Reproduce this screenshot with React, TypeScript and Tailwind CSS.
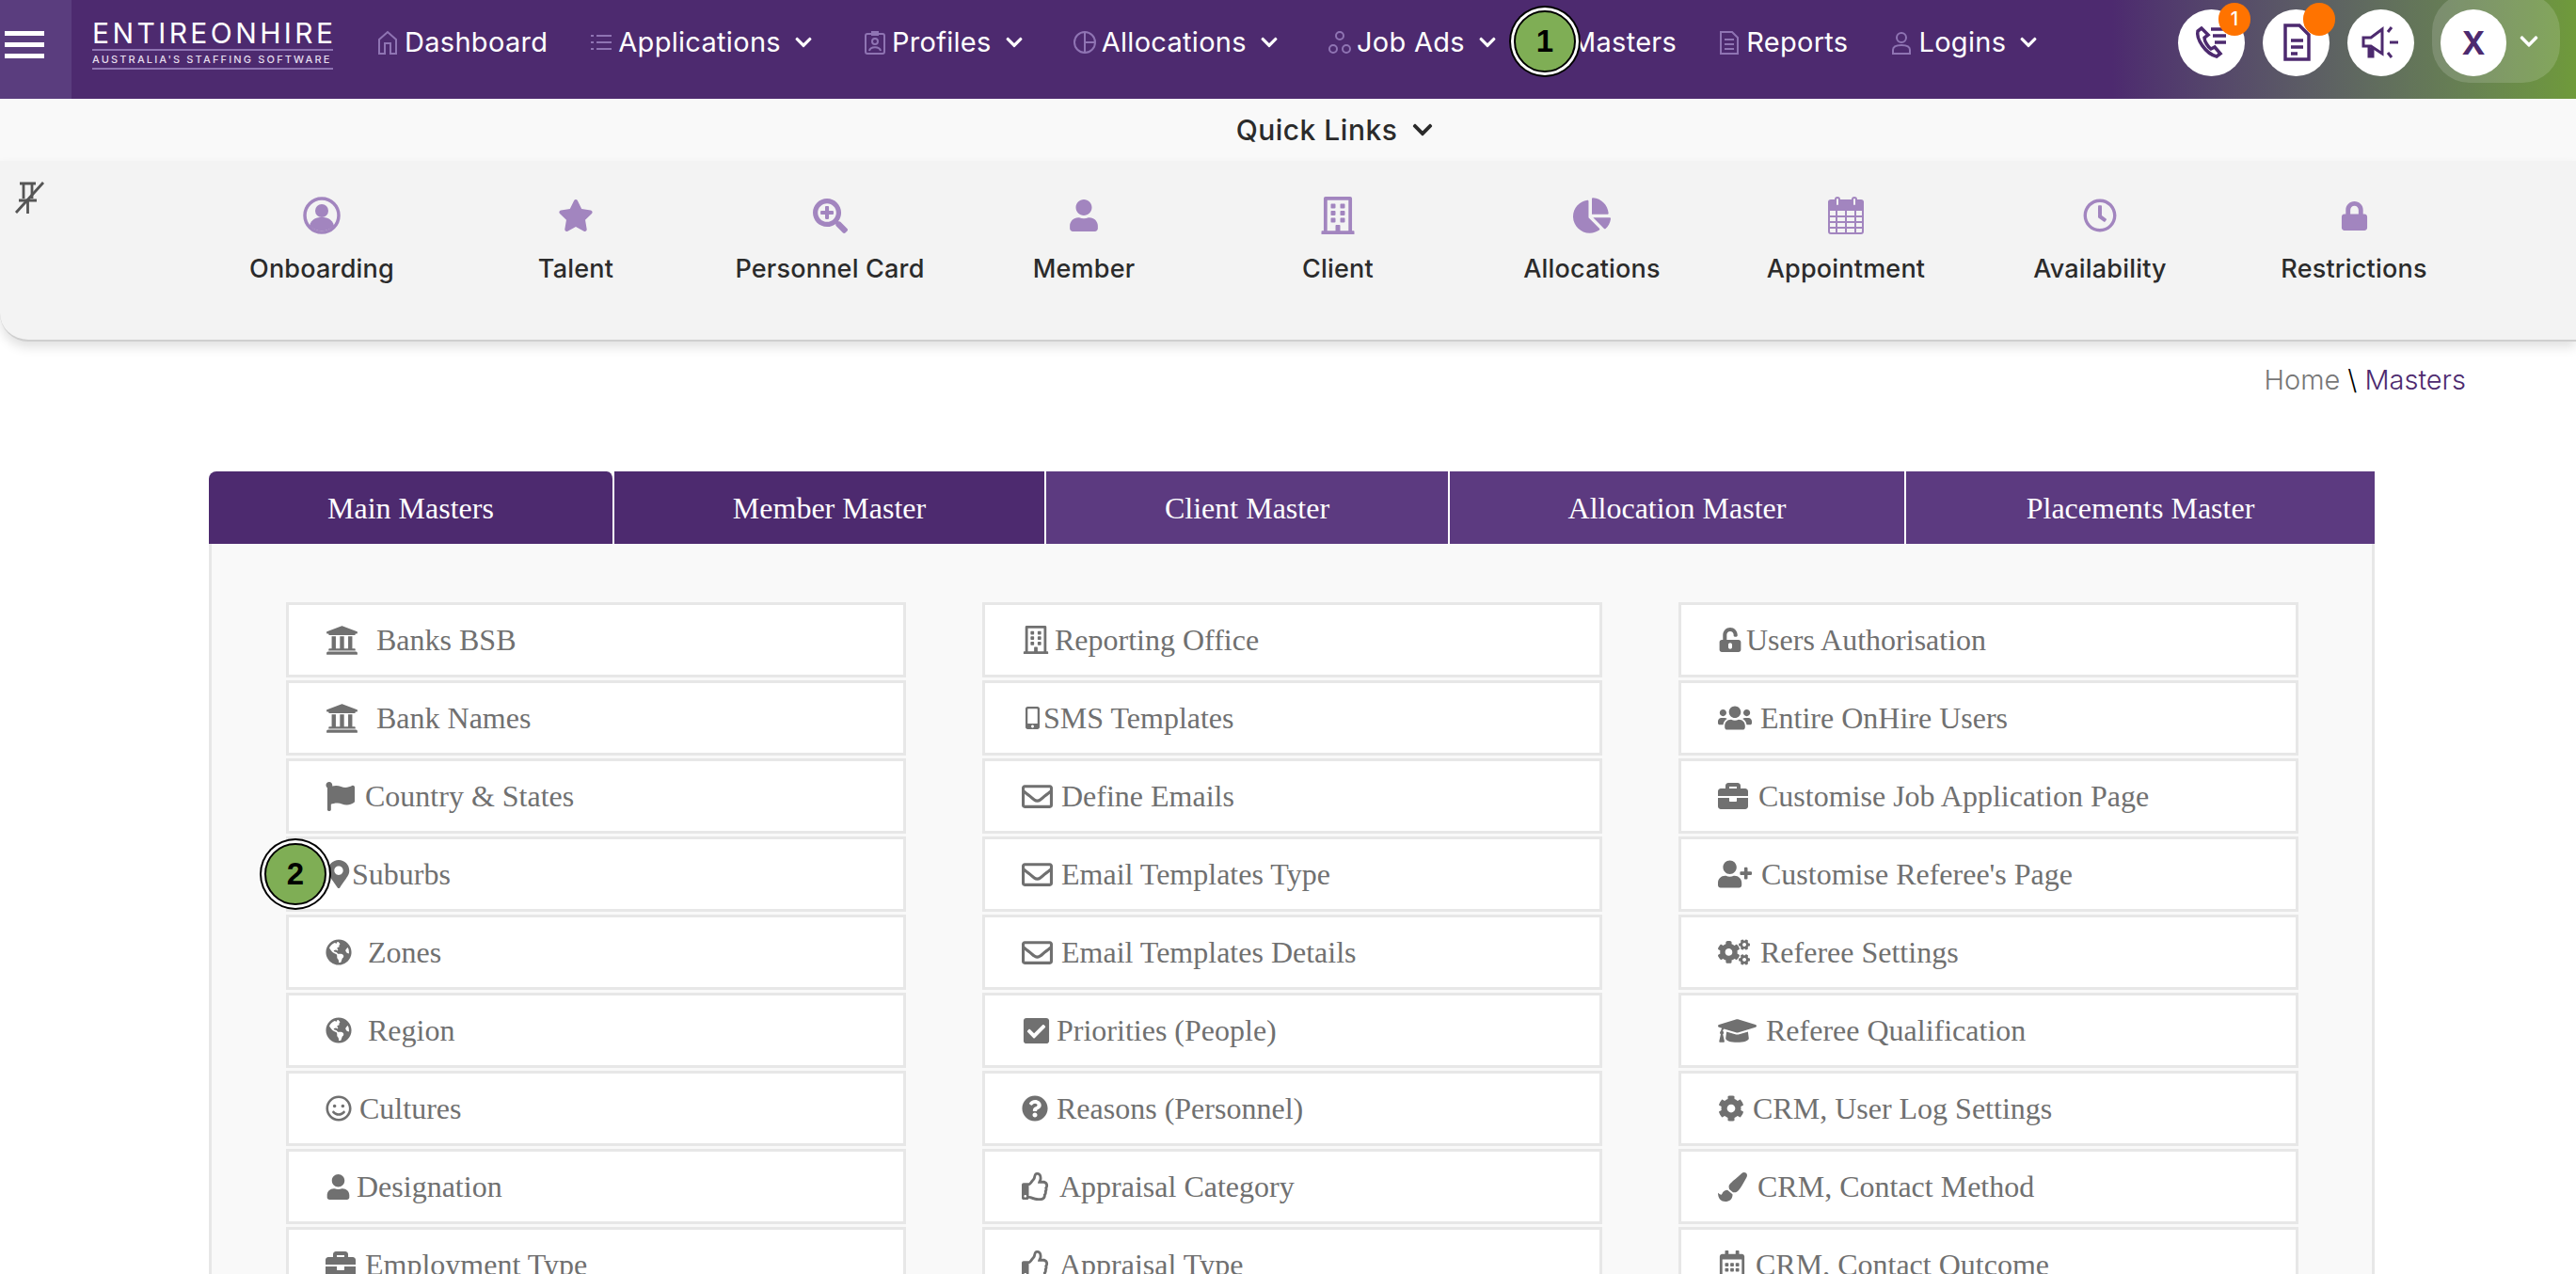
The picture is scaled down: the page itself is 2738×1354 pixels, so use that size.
import React from "react";
import {
  FaUniversity, FaFlag, FaMapMarkerAlt, FaGlobeAmericas, FaRegSmile, FaUser, FaBriefcase,
  FaRegBuilding, FaMobileAlt, FaRegEnvelope, FaCheckSquare, FaQuestionCircle, FaRegThumbsUp,
  FaUnlockAlt, FaUsers, FaUserPlus, FaCogs, FaGraduationCap, FaCog, FaPaintBrush, FaRegCalendarAlt,
  FaStar, FaSearchPlus, FaChartPie, FaRegClock, FaLock, FaChevronDown,
} from "react-icons/fa";

const NavSvg = ({ children }: { children: React.ReactNode }) => (
  <svg width="24" height="26" viewBox="0 0 24 26" fill="none" stroke="#8f74b3" strokeWidth="2" className="shrink-0">{children}</svg>
);

const Chevron = () => <FaChevronDown className="text-white shrink-0" size={20} />;

const navItems: { label: string; chevron?: boolean; icon: React.ReactNode; cls: string }[] = [
  { label: "Dashboard", cls: "mr-[45px]", icon: <NavSvg><path d="M3 25V10l9-8 9 8v15h-6V14H9v11z" /></NavSvg> },
  { label: "Applications", chevron: true, cls: "mr-[54px]", icon: <NavSvg><path d="M1 6h3M7 6h16M1 13h3M7 13h16M1 20h3M7 20h16" /></NavSvg> },
  { label: "Profiles", chevron: true, cls: "mr-[53px]", icon: <NavSvg><rect x="2" y="4" width="20" height="21" rx="2" /><path d="M9 2h6v3H9z" /><circle cx="12" cy="12" r="3" /><path d="M6 22c1-5 11-5 12 0" /></NavSvg> },
  { label: "Allocations", chevron: true, cls: "mr-[53px]", icon: <NavSvg><circle cx="12" cy="13" r="11" /><path d="M12 2v22M12 13h11" /></NavSvg> },
  { label: "Job Ads", chevron: true, cls: "mr-[49px]", icon: <NavSvg><circle cx="12" cy="6" r="4" /><circle cx="5" cy="20" r="4" /><circle cx="19" cy="20" r="4" /></NavSvg> },
  { label: "Masters", cls: "mr-[44px]", icon: <NavSvg><circle cx="12" cy="13" r="9" /></NavSvg> },
  { label: "Reports", cls: "mr-[45px]", icon: <NavSvg><path d="M3 2h12l6 6v17H3z" /><path d="M7 10h10M7 15h10M7 20h10" /></NavSvg> },
  { label: "Logins", chevron: true, cls: "", icon: <NavSvg><circle cx="12" cy="8" r="5" /><path d="M3 25v-4c0-3 3-5 9-5s9 2 9 5v4z" /></NavSvg> },
];

const OnboardIcon = () => (
  <svg width="40" height="40" viewBox="0 0 40 40"><circle cx="20" cy="20" r="18" fill="none" stroke="#a285bf" strokeWidth="3.5" /><circle cx="20" cy="15" r="7" fill="#a285bf" /><path d="M7 31c2-8 8-9 13-9s11 1 13 9c-7 7-19 7-26 0z" fill="#a285bf" /></svg>
);

const CalendarGrid = () => (
  <svg width="38" height="40" viewBox="0 0 38 40" fill="none" stroke="#a285bf" strokeWidth="2">
    <path d="M1 6a2 2 0 0 1 2-2h32a2 2 0 0 1 2 2v8H1z" fill="#a285bf" />
    <rect x="1" y="5" width="36" height="34" rx="2" />
    <path d="M1 21h36M1 27h36M1 33h36M9 14v25M19 14v25M29 14v25" />
    <rect x="8" y="1" width="4" height="9" rx="2" fill="#f3f3f3" />
    <rect x="26" y="1" width="4" height="9" rx="2" fill="#f3f3f3" />
  </svg>
);

const quick: { label: string; icon: React.ReactNode }[] = [
  { label: "Onboarding", icon: <OnboardIcon /> },
  { label: "Talent", icon: <FaStar size={38} /> },
  { label: "Personnel Card", icon: <FaSearchPlus size={37} /> },
  { label: "Member", icon: <FaUser size={34} /> },
  { label: "Client", icon: <FaRegBuilding size={40} /> },
  { label: "Allocations", icon: <FaChartPie size={40} /> },
  { label: "Appointment", icon: <CalendarGrid /> },
  { label: "Availability", icon: <FaRegClock size={36} /> },
  { label: "Restrictions", icon: <FaLock size={31} /> },
];

type Row = { t: string; i: React.ReactNode; w: string };

const col1: Row[] = [
  { t: "Banks BSB", i: <FaUniversity size={35} />, w: "w-[54px]" },
  { t: "Bank Names", i: <FaUniversity size={35} />, w: "w-[54px]" },
  { t: "Country & States", i: <FaFlag size={31} />, w: "w-[42px]" },
  { t: "Suburbs", i: <FaMapMarkerAlt size={30} />, w: "w-[28px]" },
  { t: "Zones", i: <FaGlobeAmericas size={28} />, w: "w-[45px]" },
  { t: "Region", i: <FaGlobeAmericas size={28} />, w: "w-[45px]" },
  { t: "Cultures", i: <FaRegSmile size={28} />, w: "w-[36px]" },
  { t: "Designation", i: <FaUser size={27} />, w: "w-[33px]" },
  { t: "Employment Type", i: <FaBriefcase size={32} />, w: "w-[42px]" },
];
const col2: Row[] = [
  { t: "Reporting Office", i: <FaRegBuilding size={30} />, w: "w-[35px]" },
  { t: "SMS Templates", i: <FaMobileAlt size={24} />, w: "w-[23px]" },
  { t: "Define Emails", i: <FaRegEnvelope size={33} />, w: "w-[42px]" },
  { t: "Email Templates Type", i: <FaRegEnvelope size={33} />, w: "w-[42px]" },
  { t: "Email Templates Details", i: <FaRegEnvelope size={33} />, w: "w-[42px]" },
  { t: "Priorities (People)", i: <FaCheckSquare size={31} />, w: "w-[37px]" },
  { t: "Reasons (Personnel)", i: <FaQuestionCircle size={28} />, w: "w-[37px]" },
  { t: "Appraisal Category", i: <FaRegThumbsUp size={30} />, w: "w-[40px]" },
  { t: "Appraisal Type", i: <FaRegThumbsUp size={30} />, w: "w-[40px]" },
];
const col3: Row[] = [
  { t: "Users Authorisation", i: <FaUnlockAlt size={26} />, w: "w-[30px]" },
  { t: "Entire OnHire Users", i: <FaUsers size={36} />, w: "w-[45px]" },
  { t: "Customise Job Application Page", i: <FaBriefcase size={32} />, w: "w-[43px]" },
  { t: "Customise Referee's Page", i: <FaUserPlus size={36} />, w: "w-[46px]" },
  { t: "Referee Settings", i: <FaCogs size={34} />, w: "w-[45px]" },
  { t: "Referee Qualification", i: <FaGraduationCap size={41} />, w: "w-[51px]" },
  { t: "CRM, User Log Settings", i: <FaCog size={28} />, w: "w-[37px]" },
  { t: "CRM, Contact Method", i: <FaPaintBrush size={31} />, w: "w-[42px]" },
  { t: "CRM, Contact Outcome", i: <FaRegCalendarAlt size={30} />, w: "w-[40px]" },
];

const tabs: { t: string; cls: string }[] = [
  { t: "Main Masters", cls: "w-[431px] bg-[#4d2a6f] rounded-t-[8px] border-r-2 border-white" },
  { t: "Member Master", cls: "w-[459px] bg-[#4d2a6f] border-r-2 border-white" },
  { t: "Client Master", cls: "w-[429px] bg-[#5c3a80] border-r-2 border-white" },
  { t: "Allocation Master", cls: "w-[485px] bg-[#5c3a80] border-r-2 border-white" },
  { t: "Placements Master", cls: "flex-1 bg-[#5c3a80]" },
];

const Marker = ({ n, cls }: { n: string; cls: string }) => (
  <div className={`absolute z-10 w-[66px] h-[66px] rounded-full bg-[#7fae55] border-2 border-black shadow-[0_0_0_3px_#fff,0_0_0_5px_#000] flex items-center justify-center text-black text-[33px] font-bold font-['Liberation_Sans',sans-serif] ${cls}`}>{n}</div>
);

const Column = ({ rows }: { rows: Row[] }) => (
  <div className="flex flex-col gap-[3px]">
    {rows.map((r) => (
      <div key={r.t} className="h-[80px] shrink-0 bg-white border-[3px] border-[#e7e7e7] pl-[39px] flex items-center text-[#707070] text-[32px]">
        <span className={`${r.w} shrink-0 flex items-center`}>{r.i}</span>
        <span>{r.t}</span>
      </div>
    ))}
  </div>
);

export default function App() {
  return (
    <div className="relative w-full h-[1354px] overflow-hidden bg-white font-['Inter',sans-serif]">
      <Marker n="1" cls="left-[1609px] top-[11px]" />
      <Marker n="2" cls="left-[281px] top-[896px]" />

      <header className="h-[105px] flex items-stretch bg-gradient-to-r from-[#4d2a6f] from-[82%] to-[#6f9a3a]">
        <div className="w-[76px] bg-[#5a3d7e] flex flex-col gap-[7px] pt-[33px] pl-[5px] shrink-0">
          <span className="block w-[42px] h-[5px] bg-white" />
          <span className="block w-[42px] h-[5px] bg-white" />
          <span className="block w-[42px] h-[5px] bg-white" />
        </div>
        <div className="w-[256px] ml-[22px] mr-[46px] pt-[19px] shrink-0 text-white">
          <div className="text-[30px] leading-[32px] tracking-[3.4px] font-normal whitespace-nowrap border-b-2 border-[#8f74b3] pb-[1px]">ENTIREONHIRE</div>
          <div className="text-[11px] leading-[18px] tracking-[2.15px] font-medium whitespace-nowrap border-b-2 border-[#8f74b3] text-[#e4dcec]">AUSTRALIA'S STAFFING SOFTWARE</div>
        </div>
        <nav className="flex items-center h-[90px] text-white text-[29px] tracking-[0.3px]">
          {navItems.map((n) => (
            <div key={n.label} className={`flex items-center ${n.cls}`}>
              <span className="w-[30px] shrink-0">{n.icon}</span>
              <span className="whitespace-nowrap">{n.label}</span>
              {n.chevron && <span className="ml-[14px]"><Chevron /></span>}
            </div>
          ))}
        </nav>
        <div className="ml-auto flex items-center h-[90px] gap-[19px] pr-[17px]">
          <div className="relative w-[71px] h-[71px] rounded-full bg-white flex items-center justify-center">
            <svg width="42" height="42" viewBox="0 0 42 42" fill="none" stroke="#4d2a6f" strokeWidth="3.5"><path d="M10 6 6 9c-2 8 8 24 20 27l4-3-6-7-4 2c-3-2-7-8-7-12l4-3z" /><path d="M20 7h16M22 14h14M24 21h12" /></svg>
            <span className="absolute -top-[7px] -right-[6px] w-[34px] h-[35px] rounded-full bg-[#ff7300] text-white text-[20px] font-medium flex items-center justify-center">1</span>
          </div>
          <div className="relative w-[71px] h-[71px] rounded-full bg-white flex items-center justify-center">
            <svg width="34" height="42" viewBox="0 0 34 42" fill="none" stroke="#4d2a6f" strokeWidth="3.5"><path d="M5 3h15l10 10v26H5z" /><path d="M11 19h13M11 26h13M11 33h7" /></svg>
            <span className="absolute -top-[7px] -right-[6px] w-[34px] h-[35px] rounded-full bg-[#ff7300]" />
          </div>
          <div className="w-[71px] h-[71px] rounded-full bg-white flex items-center justify-center">
            <svg width="42" height="38" viewBox="0 0 42 38" fill="#4d2a6f" stroke="#4d2a6f" strokeWidth="3"><path d="M2 14h8l12-9v26l-12-8H2z" fill="none" /><path d="M8 24v10h4V25" /><path d="M28 8l4-5M30 19h9M28 30l4 5" fill="none" /></svg>
          </div>
          <div className="flex items-center h-[95px] -mt-[10px] w-[136px] pl-[9px] rounded-b-[40px] rounded-t-[40px] bg-white/15">
            <div className="w-[70px] h-[71px] mt-[10px] rounded-full bg-white flex items-center justify-center text-[#4d2a6f] text-[34px] font-bold">X</div>
            <FaChevronDown className="text-white ml-[13px] mt-[8px]" size={22} />
          </div>
        </div>
      </header>

      <div className="h-[66px] bg-[#f9f9f9] flex items-center justify-center gap-[15px] text-[#2b2b2b] text-[30px] tracking-[0.5px] font-medium pl-[100px]">
        <span>Quick Links</span>
        <FaChevronDown size={24} />
      </div>

      <section className="h-[192px] bg-[#f3f3f3] rounded-bl-[30px] border-b-2 border-[#cfcfcf] shadow-[0_6px_12px_rgba(0,0,0,0.12)] flex">
        <div className="w-[207px] shrink-0 pl-[14px] pt-[20px]">
          <svg width="36" height="38" viewBox="0 0 36 38" fill="none" stroke="#555555" strokeWidth="2.8"><path d="M7 4h17M11 4v16M20 4v16M6 22h19M15.5 22v14" /><path d="M3 35 32 3" /></svg>
        </div>
        <div className="grid grid-cols-[repeat(9,270px)] pt-[37px] h-fit">
          {quick.map((q) => (
            <div key={q.label} className="flex flex-col items-center">
              <span className="h-[42px] flex items-center text-[#a285bf]">{q.icon}</span>
              <span className="mt-[16px] text-[#2b2b2b] text-[27px] tracking-[0.2px] font-medium whitespace-nowrap">{q.label}</span>
            </div>
          ))}
        </div>
      </section>

      <div className="flex justify-end pr-[117px] pt-[22px] text-[29px] leading-[38px] font-light">
        <span className="text-[#777777]">Home</span>
        <span className="text-black ml-[8px] mr-[8px]">\</span>
        <span className="text-[#4d2a6f]">Masters</span>
      </div>

      <main className="mx-[222px] w-[2302px] mt-[78px] font-['Liberation_Serif',serif]">
        <div className="h-[77px] flex text-white text-[32px]">
          {tabs.map((t) => (
            <div key={t.t} className={`${t.cls} flex items-center justify-center`}>{t.t}</div>
          ))}
        </div>
        <div className="bg-[#f9f9f9] border-x-[3px] border-[#e7e7e7] pt-[62px] pl-[79px] pr-[78px] grid grid-cols-3 gap-x-[81px]">
          <Column rows={col1} />
          <Column rows={col2} />
          <Column rows={col3} />
        </div>
      </main>
    </div>
  );
}
